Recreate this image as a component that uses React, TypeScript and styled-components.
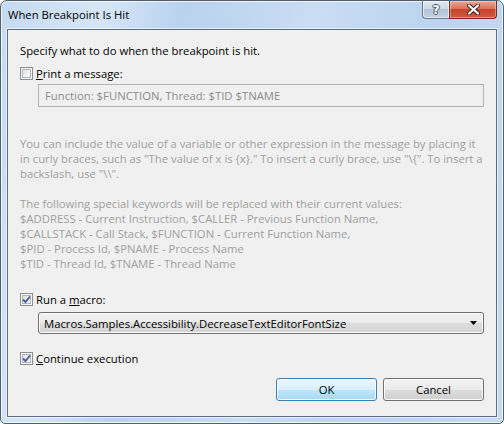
import styled, { createGlobalStyle } from 'styled-components';

const GlobalStyle = createGlobalStyle`
  html, body {
    margin: 0;
    padding: 0;
    background: #ffffff;
  }
  body {
    font-family: "Open Sans", "Noto Sans", sans-serif;
    font-size: 11.3px;
    color: #000000;
  }
`;

function CheckMark() {
  return (
    <svg width="11" height="11" viewBox="0 0 11 11">
      <path d="M2 5.5 L4.5 8 L9 2.5" fill="none" stroke="#4a5f97" strokeWidth="1.9" />
    </svg>
  );
}

function CheckBox({ checked }: { checked?: boolean }) {
  return <StyledCheck $checked={checked}>{checked && <CheckMark />}</StyledCheck>;
}

function App() {
  return (
    <>
      <GlobalStyle />
      <StyledWindow>
        <StyledTitleBar>
          <StyledTitle>When Breakpoint Is Hit</StyledTitle>
          <StyledCaption>
            <StyledHelpButton>?</StyledHelpButton>
            <StyledCloseButton>
              <svg width="13" height="11" viewBox="0 0 13 11">
                <path d="M2 1.5 L11 9.5 M11 1.5 L2 9.5" stroke="#3b2320" strokeWidth="4" strokeLinecap="round" />
                <path d="M2 1.5 L11 9.5 M11 1.5 L2 9.5" stroke="#ffffff" strokeWidth="2.2" strokeLinecap="round" />
              </svg>
            </StyledCloseButton>
          </StyledCaption>
        </StyledTitleBar>

        <StyledClient>
          <StyledLine>Specify what to do when the breakpoint is hit.</StyledLine>

          <StyledOption $top={8}>
            <CheckBox />
            <span>
              <u>P</u>rint a message:
            </span>
          </StyledOption>
          <StyledTextBox disabled readOnly value="Function: $FUNCTION, Thread: $TID $TNAME" />

          <StyledHelp>
            <p>
              <span>You can include the value of a variable or other expression in the message by placing it</span>
              <span>{'in curly braces, such as "The value of x is {x}." To insert a curly brace, use "\\{". To insert a'}</span>
              <span>{'backslash, use "\\\\".'}</span>
            </p>
            <p>
              <span>The following special keywords will be replaced with their current values:</span>
              <span>$ADDRESS - Current Instruction, $CALLER - Previous Function Name,</span>
              <span>$CALLSTACK - Call Stack, $FUNCTION - Current Function Name,</span>
              <span>$PID - Process Id, $PNAME - Process Name</span>
              <span>$TID - Thread Id, $TNAME - Thread Name</span>
            </p>
          </StyledHelp>

          <StyledOption $top={21}>
            <CheckBox checked />
            <span>
              Run a <u>m</u>acro:
            </span>
          </StyledOption>
          <StyledCombo>
            <span>Macros.Samples.Accessibility.DecreaseTextEditorFontSize</span>
            <svg width="7" height="4" viewBox="0 0 7 4">
              <path d="M0 0 H7 L3.5 4 Z" fill="#000000" />
            </svg>
          </StyledCombo>

          <StyledOption $top={17}>
            <CheckBox checked />
            <span>
              <u>C</u>ontinue execution
            </span>
          </StyledOption>

          <StyledButtonRow>
            <StyledButton $primary>OK</StyledButton>
            <StyledButton>Cancel</StyledButton>
          </StyledButtonRow>
        </StyledClient>
      </StyledWindow>
    </>
  );
}

const StyledWindow = styled.div`
  box-sizing: border-box;
  width: 504px;
  height: 424px;
  display: flex;
  flex-direction: column;
  border: 1px solid #4f5e70;
  border-radius: 7px 7px 5px 5px;
  overflow: hidden;
  background: linear-gradient(
    100deg,
    #c5daf1 0%,
    #d6e6f7 18%,
    #b9d2ee 32%,
    #c9ddf3 55%,
    #bcd4ef 75%,
    #c6dbf2 100%
  );
  box-shadow: inset 0 0 0 1px rgba(255, 255, 255, 0.75);
`;

const StyledTitleBar = styled.div`
  height: 28px;
  flex-shrink: 0;
  display: flex;
  align-items: flex-start;
  justify-content: space-between;
  padding: 0 6px 0 7px;
`;

const StyledTitle = styled.span`
  line-height: 28px;
  color: #000000;
`;

const StyledCaption = styled.div`
  display: flex;
  height: 18px;
`;

const StyledHelpButton = styled.div`
  box-sizing: border-box;
  width: 27px;
  height: 18px;
  display: flex;
  align-items: center;
  justify-content: center;
  border: 1px solid #6b7a8d;
  border-top: 0;
  border-right: 0;
  border-radius: 0 0 0 4px;
  background: linear-gradient(#e3eaf2 0%, #cdd8e4 45%, #b4c4d6 50%, #c3d2e2 100%);
  box-shadow: inset 0 0 0 1px rgba(255, 255, 255, 0.55);
  color: #ffffff;
  font-family: "DejaVu Sans", sans-serif;
  font-weight: bold;
  font-size: 13px;
  line-height: 1;
  text-shadow: 1px 0 0 #4a5566, -1px 0 0 #4a5566, 0 1px 0 #4a5566, 0 -1px 0 #4a5566;
`;

const StyledCloseButton = styled.div`
  box-sizing: border-box;
  width: 48px;
  height: 18px;
  display: flex;
  align-items: center;
  justify-content: center;
  border: 1px solid #6e3028;
  border-top: 0;
  border-radius: 0 0 4px 0;
  background: linear-gradient(#e9a898 0%, #d9725e 45%, #c5432c 50%, #d25a3f 100%);
  box-shadow: inset 0 0 0 1px rgba(255, 255, 255, 0.35);
`;

const StyledClient = styled.div`
  flex: 1;
  margin: 0 6px 6px;
  padding: 13px 12px 0;
  display: flex;
  flex-direction: column;
  border: 1px solid #5d6c7e;
  background: #f0f0f0;
  box-shadow: 0 0 0 1px rgba(255, 255, 255, 0.6);
`;

const StyledLine = styled.div`
  line-height: 15px;
  white-space: nowrap;
`;

const StyledOption = styled.div<{ $top: number }>`
  display: flex;
  align-items: center;
  gap: 3px;
  height: 15px;
  margin-top: ${(p) => p.$top}px;
  line-height: 15px;
  white-space: nowrap;
`;

const StyledCheck = styled.span<{ $checked?: boolean }>`
  box-sizing: border-box;
  width: 13px;
  height: 13px;
  flex-shrink: 0;
  display: flex;
  align-items: center;
  justify-content: center;
  border: 1px solid #8e8f8f;
  background: linear-gradient(135deg, #d9dbe0 0%, #f0f1f3 60%, #fbfbfb 100%);
  box-shadow: inset 0 0 0 1px #f6f6f6, inset 0 0 0 2px #b2b6bc;
`;

const StyledTextBox = styled.input`
  box-sizing: border-box;
  height: 23px;
  margin: 3px 0 0 18px;
  padding: 0 6px;
  border: 1px solid #b4b4b4;
  border-radius: 0;
  background: #f0f0f0;
  font-family: "Open Sans", "Noto Sans", sans-serif;
  font-size: 11.3px;
  color: #8d8d8d;
  outline: none;
`;

const StyledHelp = styled.div`
  margin-top: 29px;
  color: #a0a0a0;
  line-height: 15px;
  white-space: nowrap;

  & > p {
    margin: 0;
  }

  & > p + p {
    margin-top: 15px;
  }

  & span {
    display: block;
  }
`;

const StyledCombo = styled.div`
  box-sizing: border-box;
  height: 22px;
  margin: 5px 0 0 18px;
  padding: 0 6px 0 5px;
  display: flex;
  align-items: center;
  justify-content: space-between;
  border: 1px solid #707070;
  border-radius: 3px;
  background: linear-gradient(#f2f2f2 0%, #ebebeb 50%, #dddddd 51%, #d3d3d3 100%);
  box-shadow: inset 0 0 0 1px #fbfbfb;
  white-space: nowrap;
`;

const StyledButtonRow = styled.div`
  margin-top: 12px;
  display: flex;
  justify-content: flex-end;
  gap: 6px;
`;

const StyledButton = styled.button<{ $primary?: boolean }>`
  box-sizing: border-box;
  width: 101px;
  height: 23px;
  padding: 0;
  border-radius: 3px;
  border: 1px solid ${(p) => (p.$primary ? '#3c7fb1' : '#707070')};
  background: ${(p) =>
    p.$primary
      ? 'linear-gradient(#eaf6fd 0%, #d9f0fc 50%, #bee6fd 51%, #a7d9f5 100%)'
      : 'linear-gradient(#f2f2f2 0%, #ebebeb 50%, #dddddd 51%, #cfcfcf 100%)'};
  box-shadow: inset 0 0 0 1px ${(p) => (p.$primary ? '#fafdfe' : '#fcfcfc')};
  font-family: "Open Sans", "Noto Sans", sans-serif;
  font-size: 11.3px;
  color: #000000;
`;

export default App;
